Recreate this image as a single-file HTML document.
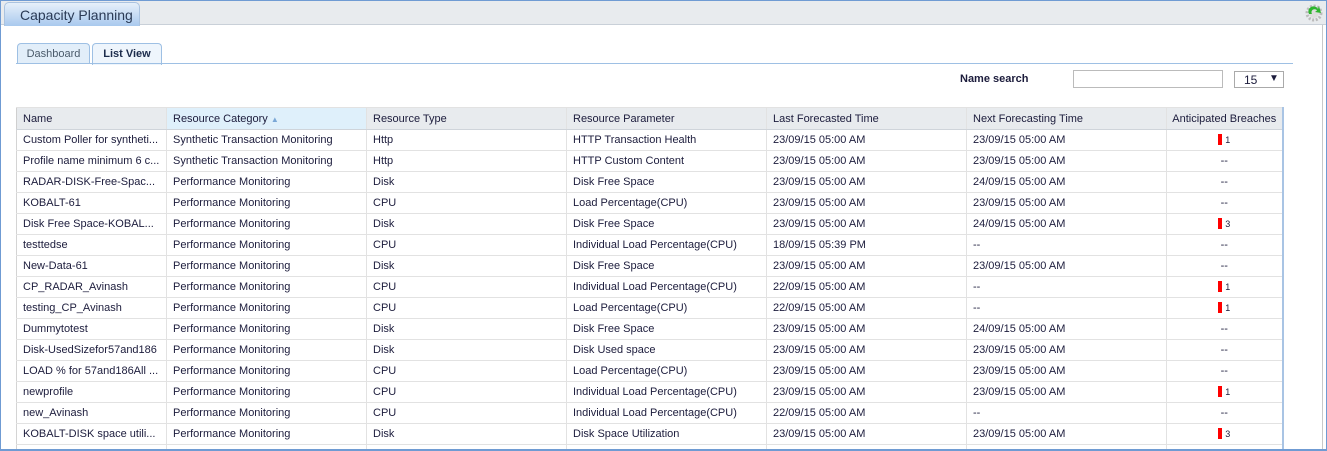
<!DOCTYPE html>
<html><head><meta charset="utf-8"><style>
*{margin:0;padding:0;box-sizing:border-box}
html,body{width:1327px;height:451px;overflow:hidden}
body{background:#fff;font-family:"Liberation Sans",Arial,sans-serif;font-size:11px;color:#1c1c3c;position:relative}
.frame{position:absolute;left:0;top:0;width:1327px;height:451px;border:1px solid #6f9bd3;border-bottom:2px solid #6f9bd3;z-index:5;pointer-events:none}
.hdr{position:absolute;left:1px;top:1px;width:1325px;height:24px;background:#e8ebee;border-bottom:1px solid #c9d0d8}
.ttab{position:absolute;left:3px;top:1px;width:136px;height:24px;background:linear-gradient(#e6f0fa,#a9c9ee);border:1px solid #aac3e0;border-bottom:none;border-radius:5px 5px 0 0;font-size:14px;color:#2a3a55;padding:4px 0 0 15px}
.rsb{position:absolute;left:1322px;top:25px;width:1px;height:424px;background:#c8c8c8}
.tab{position:absolute;top:43px;height:21px;border:1px solid #9ec0e4;border-bottom:none;border-radius:4px 4px 0 0;background:#e2eef9;font-size:11px;padding-top:4px;text-align:center}
.tline{position:absolute;left:16px;top:63px;width:1277px;height:1px;background:#9ec0e4}
.lbl{position:absolute;left:960px;top:73px;font-weight:bold;font-size:11px;color:#1c1c3c}
.inp{position:absolute;left:1073px;top:70px;width:150px;height:18px;border:1px solid #bbb}
.sel{position:absolute;left:1234px;top:71px;width:50px;height:17px;border:1px solid #aaa;font-size:12px;padding:1px 0 0 9px}
.wrap{position:absolute;left:16px;top:107px;width:1270px;height:342px;overflow:hidden}
table{border-collapse:collapse;table-layout:fixed;border:1px solid #a9c4e4;width:1266px}
td,th{height:21px;border:1px solid #e2e2e2;border-left:1px solid #d4d4d4;padding:0 6px;white-space:nowrap;overflow:hidden;font-weight:normal;text-align:left;font-size:11px}
th{height:22px;background:#e8ebee;border-bottom:1px solid #cfd4da;border-left:1px solid #cfcfcf}
th.s{background:#dff0fb}
td.c,th.c{text-align:center;padding:0 2px}
td:last-child,th:last-child{border-right:2px solid #a9c4e4}
.b{display:inline-block;width:4px;height:11px;background:#f00;vertical-align:-2px;margin-right:3px}
.n{font-size:9px}
</style></head><body>
<div class="frame"></div>
<div class="hdr"><div class="ttab">Capacity Planning</div>
<svg style="position:absolute;left:1303px;top:2px" width="20" height="20" viewBox="0 0 20 20"><circle cx="10" cy="10" r="7" fill="none" stroke="#bbb" stroke-width="3" stroke-dasharray="2 1.6"/><circle cx="10" cy="10" r="5" fill="#ddd"/><path d="M5 11 A5 5 0 0 1 14 6 L15 3 L17 10 L11 9 L13 7.5 A3 3 0 0 0 8 11 Z" fill="#2db52d"/></svg>
</div>
<div class="rsb"></div>
<div class="tab" style="left:17px;width:73px;color:#4a5a6a">Dashboard</div>
<div class="tab" style="left:92px;width:70px;font-weight:bold;color:#1c2c4c;background:#eef5fc;height:22px">List View</div>
<div class="tline"></div>
<div class="lbl">Name search</div>
<div class="inp"></div>
<div class="sel">15 <span style="position:absolute;left:34px;top:1px;font-size:10px">▼</span></div>
<div class="wrap"><table>
<colgroup><col style="width:150px"><col style="width:200px"><col style="width:200px"><col style="width:200px"><col style="width:200px"><col style="width:200px"><col style="width:116px"></colgroup>
<tr><th>Name</th><th class="s">Resource Category <span style="color:#7aa7d6;font-size:8px">▲</span></th><th>Resource Type</th><th>Resource Parameter</th><th>Last Forecasted Time</th><th>Next Forecasting Time</th><th class="c">Anticipated Breaches</th></tr>
<tr><td>Custom Poller for syntheti...</td><td>Synthetic Transaction Monitoring</td><td>Http</td><td>HTTP Transaction Health</td><td>23/09/15 05:00 AM</td><td>23/09/15 05:00 AM</td><td class="c"><span class="b"></span><span class="n">1</span></td></tr>
<tr><td>Profile name minimum 6 c...</td><td>Synthetic Transaction Monitoring</td><td>Http</td><td>HTTP Custom Content</td><td>23/09/15 05:00 AM</td><td>23/09/15 05:00 AM</td><td class="c">--</td></tr>
<tr><td>RADAR-DISK-Free-Spac...</td><td>Performance Monitoring</td><td>Disk</td><td>Disk Free Space</td><td>23/09/15 05:00 AM</td><td>24/09/15 05:00 AM</td><td class="c">--</td></tr>
<tr><td>KOBALT-61</td><td>Performance Monitoring</td><td>CPU</td><td>Load Percentage(CPU)</td><td>23/09/15 05:00 AM</td><td>23/09/15 05:00 AM</td><td class="c">--</td></tr>
<tr><td>Disk Free Space-KOBAL...</td><td>Performance Monitoring</td><td>Disk</td><td>Disk Free Space</td><td>23/09/15 05:00 AM</td><td>24/09/15 05:00 AM</td><td class="c"><span class="b"></span><span class="n">3</span></td></tr>
<tr><td>testtedse</td><td>Performance Monitoring</td><td>CPU</td><td>Individual Load Percentage(CPU)</td><td>18/09/15 05:39 PM</td><td>--</td><td class="c">--</td></tr>
<tr><td>New-Data-61</td><td>Performance Monitoring</td><td>Disk</td><td>Disk Free Space</td><td>23/09/15 05:00 AM</td><td>23/09/15 05:00 AM</td><td class="c">--</td></tr>
<tr><td>CP_RADAR_Avinash</td><td>Performance Monitoring</td><td>CPU</td><td>Individual Load Percentage(CPU)</td><td>22/09/15 05:00 AM</td><td>--</td><td class="c"><span class="b"></span><span class="n">1</span></td></tr>
<tr><td>testing_CP_Avinash</td><td>Performance Monitoring</td><td>CPU</td><td>Load Percentage(CPU)</td><td>22/09/15 05:00 AM</td><td>--</td><td class="c"><span class="b"></span><span class="n">1</span></td></tr>
<tr><td>Dummytotest</td><td>Performance Monitoring</td><td>Disk</td><td>Disk Free Space</td><td>23/09/15 05:00 AM</td><td>24/09/15 05:00 AM</td><td class="c">--</td></tr>
<tr><td>Disk-UsedSizefor57and186</td><td>Performance Monitoring</td><td>Disk</td><td>Disk Used space</td><td>23/09/15 05:00 AM</td><td>23/09/15 05:00 AM</td><td class="c">--</td></tr>
<tr><td>LOAD % for 57and186All ...</td><td>Performance Monitoring</td><td>CPU</td><td>Load Percentage(CPU)</td><td>23/09/15 05:00 AM</td><td>23/09/15 05:00 AM</td><td class="c">--</td></tr>
<tr><td>newprofile</td><td>Performance Monitoring</td><td>CPU</td><td>Individual Load Percentage(CPU)</td><td>23/09/15 05:00 AM</td><td>23/09/15 05:00 AM</td><td class="c"><span class="b"></span><span class="n">1</span></td></tr>
<tr><td>new_Avinash</td><td>Performance Monitoring</td><td>CPU</td><td>Individual Load Percentage(CPU)</td><td>22/09/15 05:00 AM</td><td>--</td><td class="c">--</td></tr>
<tr><td>KOBALT-DISK space utili...</td><td>Performance Monitoring</td><td>Disk</td><td>Disk Space Utilization</td><td>23/09/15 05:00 AM</td><td>23/09/15 05:00 AM</td><td class="c"><span class="b"></span><span class="n">3</span></td></tr>
<tr><td></td><td></td><td></td><td></td><td></td><td></td><td></td></tr>
</table></div>
</body></html>
